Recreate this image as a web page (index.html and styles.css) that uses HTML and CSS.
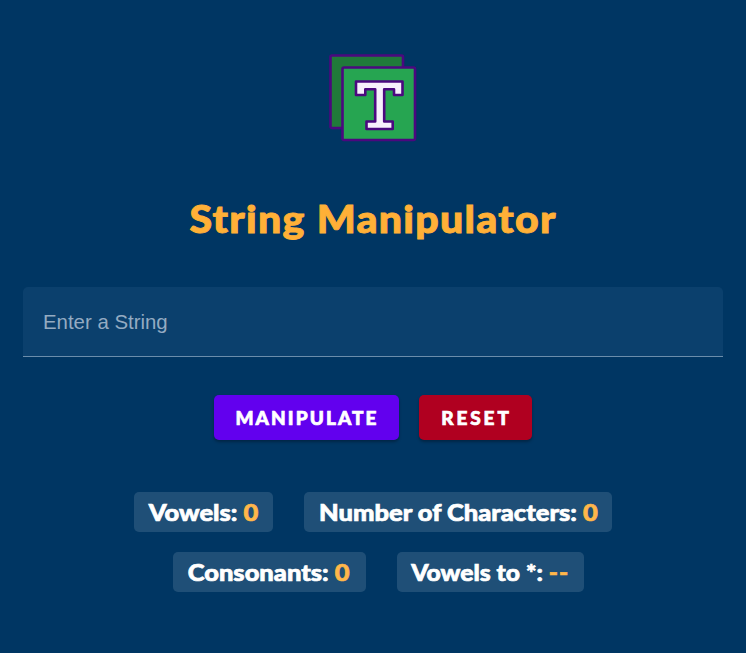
FILE: index.html
```html
<!DOCTYPE html>
<html lang="en">
<head>
<meta charset="utf-8">
<title>String Manipulator</title>
<link rel="stylesheet" href="styles.css">
</head>
<body>
<main class="app">
  <svg class="logo" viewBox="0 0 90 90" aria-hidden="true">
    <rect class="logo-back" x="2.500" y="2.500" width="72.5" height="72.5" rx="1.5"/>
    <rect class="logo-front" x="14.500" y="14.500" width="72.5" height="72.5" rx="1.5"/>
    <path class="logo-letter" d="M28 28.500H74.5V42H66V36.300H56.200V68.500H64.700V76H38.500V68.500H47.200V36.300H37.300V42H28Z"/>
  </svg>
  <h1 class="title">String Manipulator</h1>
  <input class="field" type="text" placeholder="Enter a String">
  <div class="actions">
    <button class="button button-primary">Manipulate</button>
    <button class="button button-danger">Reset</button>
  </div>
  <div class="results">
    <div class="chip vowels"><span>Vowels: <b>0</b></span></div>
    <div class="chip characters"><span>Number of Characters: <b>0</b></span></div>
    <div class="chip consonants"><span>Consonants: <b>0</b></span></div>
    <div class="chip masked"><span>Vowels to *: <b>--</b></span></div>
  </div>
</main>
</body>
</html>
```
FILE: styles.css
```css
* { box-sizing: border-box; }
body {
  margin: 0;
  background: #003663;
  color: #fff;
  font-family: Lato, "Liberation Sans", sans-serif;
}
.app {
  display: flex;
  flex-direction: column;
  align-items: center;
  min-height: 653px;
  padding: 53px 23px 0;
}
.logo { width: 90px; height: 90px; flex: none; }
.logo rect { stroke: #4b087f; stroke-width: 2.6; }
.logo-back { fill: #207a3a; }
.logo-front { fill: #26a551; }
.logo-letter { fill: #f7f0fc; stroke: #4b087f; stroke-width: 2.6; stroke-linejoin: round; }
.title {
  margin: 50px 0 0;
  height: 50px;
  font-size: 38px;
  line-height: 50px;
  font-weight: 900;
  letter-spacing: 1.2px;
  white-space: nowrap;
  color: #ffb037;
  transform: scaleX(1.08);
  -webkit-text-stroke: 0.9px currentColor;
}
.field {
  width: 100%;
  height: 70px;
  margin-top: 44px;
  padding: 1px 20px 0;
  border: 0;
  border-bottom: 1px solid #6b8dab;
  border-radius: 5px 5px 0 0;
  background: #0b406d;
  color: #fff;
  font: 20.4px "Liberation Sans", Arial, sans-serif;
  outline: none;
}
.field::placeholder { color: #94abc2; opacity: 1; }
.actions { display: flex; gap: 20px; margin-top: 38px; }
.button {
  height: 45px;
  padding: 0 0 1px;
  border: 0;
  border-radius: 5px;
  color: #fff;
  font: 900 19px/43px Lato, sans-serif;
  letter-spacing: 2.1px;
  text-indent: 1px;
  text-transform: uppercase;
  box-shadow: 0 2px 3px rgba(0, 0, 0, .3);
  -webkit-text-stroke: 0.7px currentColor;
}
.button-primary { width: 185px; background: #6200ee; }
.button-danger { width: 113px; background: #b00020; letter-spacing: 2.9px; text-indent: 2px; }
.results {
  display: flex;
  flex-wrap: wrap;
  justify-content: center;
  gap: 20px 31px;
  width: 500px;
  margin-top: 52px;
}
.chip {
  display: flex;
  justify-content: center;
  height: 40px;
  border-radius: 5px;
  background: #1f4f77;
  font-size: 23.5px;
  line-height: 40px;
  font-weight: 900;
  white-space: nowrap;
  -webkit-text-stroke: 0.7px currentColor;
}
.chip span { transform: scaleX(1.085); }
.chip b { color: #ffb74a; font-weight: 900; -webkit-text-stroke-color: #ffb74a; }
.vowels { width: 139px; }
.characters { width: 308px; }
.consonants { width: 193px; margin-left: 10px; }
.masked { width: 187px; }
.masked span { transform: scaleX(1.05); }
.masked b { letter-spacing: 1px; }
```
